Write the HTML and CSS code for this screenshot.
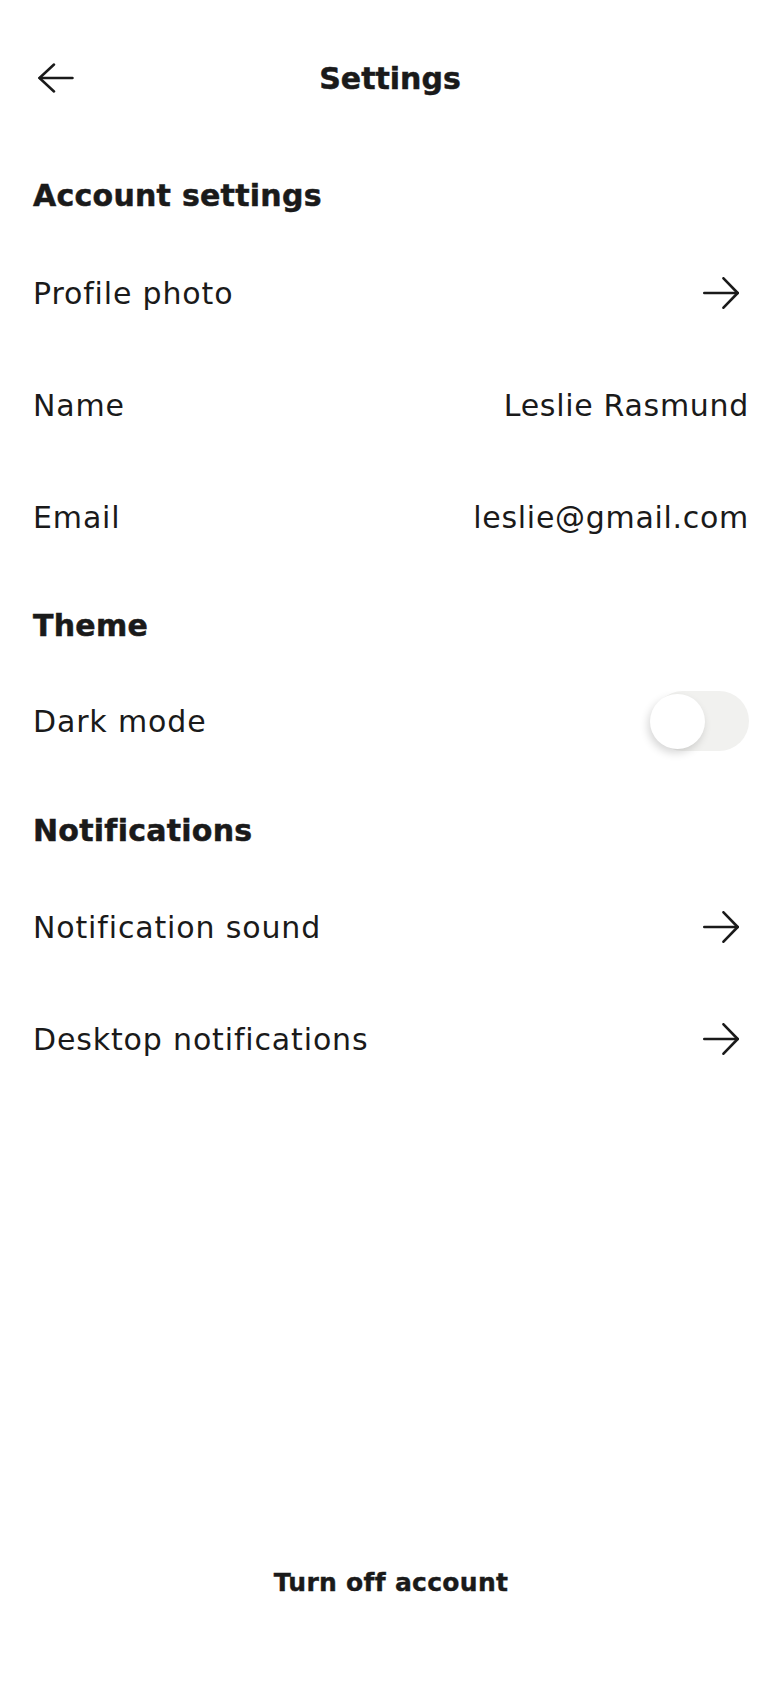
FILE: index.html
```html
<!DOCTYPE html>
<html lang="en">
<head>
<meta charset="utf-8">
<title>Settings</title>
<link rel="stylesheet" href="styles.css">
</head>
<body>
<div class="page">
  <header class="topbar">
    <button class="back" aria-label="Back">
      <svg width="36" height="30" viewBox="0 0 36 30" fill="none" stroke="currentColor" stroke-width="2.5" stroke-linecap="round" stroke-linejoin="round">
        <line x1="1.5" y1="15" x2="34.5" y2="15"/>
        <polyline points="16,1.5 1.5,15 16,28.5"/>
      </svg>
    </button>
    <h1 class="title">Settings</h1>
    <span class="spacer"></span>
  </header>

  <main class="content">
    <section class="section section-first">
      <h2 class="section-title">Account settings</h2>
      <div class="row">
        <span class="label">Profile photo</span>
        <svg class="chevron" width="36" height="32" viewBox="0 0 36 32" fill="none" stroke="currentColor" stroke-width="2.6" stroke-linecap="round" stroke-linejoin="round">
          <line x1="1.3" y1="16" x2="34.7" y2="16"/>
          <polyline points="20.5,1.3 34.7,16 20.5,30.7"/>
        </svg>
      </div>
      <div class="row">
        <span class="label">Name</span>
        <span class="value">Leslie Rasmund</span>
      </div>
      <div class="row">
        <span class="label">Email</span>
        <span class="value">leslie@gmail.com</span>
      </div>
    </section>

    <section class="section">
      <h2 class="section-title">Theme</h2>
      <div class="row">
        <span class="label">Dark mode</span>
        <span class="toggle" role="switch" aria-checked="false"><span class="knob"></span></span>
      </div>
    </section>

    <section class="section section-notify">
      <h2 class="section-title">Notifications</h2>
      <div class="row">
        <span class="label">Notification sound</span>
        <svg class="chevron" width="36" height="32" viewBox="0 0 36 32" fill="none" stroke="currentColor" stroke-width="2.6" stroke-linecap="round" stroke-linejoin="round">
          <line x1="1.3" y1="16" x2="34.7" y2="16"/>
          <polyline points="20.5,1.3 34.7,16 20.5,30.7"/>
        </svg>
      </div>
      <div class="row">
        <span class="label">Desktop notifications</span>
        <svg class="chevron" width="36" height="32" viewBox="0 0 36 32" fill="none" stroke="currentColor" stroke-width="2.6" stroke-linecap="round" stroke-linejoin="round">
          <line x1="1.3" y1="16" x2="34.7" y2="16"/>
          <polyline points="20.5,1.3 34.7,16 20.5,30.7"/>
        </svg>
      </div>
    </section>
  </main>

  <footer class="footer">
    <button class="danger">Turn off account</button>
  </footer>
</div>
</body>
</html>
```

FILE: styles.css
```css
* { box-sizing: border-box; }

html, body {
  margin: 0;
  padding: 0;
  background: #ffffff;
}

body {
  font-family: "DejaVu Sans", "Open Sans", sans-serif;
  color: #1a1a1a;
}

.page {
  min-height: 100vh;
  display: flex;
  flex-direction: column;
  padding: 0 31px 0 33px;
}

.topbar {
  margin-top: 46px;
  height: 64px;
  display: grid;
  grid-template-columns: 60px 1fr 60px;
  align-items: center;
}

.back {
  border: 0;
  background: none;
  padding: 0;
  margin-left: 5px;
  color: #1a1a1a;
  display: flex;
  align-items: center;
  width: 36px;
}

.title {
  margin: 0;
  text-align: center;
  font-size: 30px;
  font-weight: 700;
  line-height: 35px;
  letter-spacing: 0;
  -webkit-text-stroke: 0.5px #1a1a1a;
  transform: translateX(-1px);
}

.content {
  margin-top: 68px;
  display: flex;
  flex-direction: column;
}

.section + .section {
  margin-top: 35px;
}

.section-notify {
  padding-top: 1px;
}

.section-title {
  margin: 0 0 22px;
  font-size: 30px;
  font-weight: 700;
  line-height: 35px;
  letter-spacing: 0.25px;
  -webkit-text-stroke: 0.5px #1a1a1a;
}

.section-first .section-title {
  margin-bottom: 24px;
}

.section-notify .section-title {
  margin-bottom: 23px;
}

.row {
  height: 112px;
  display: flex;
  align-items: center;
  justify-content: space-between;
}

.label,
.value {
  font-size: 30px;
  line-height: 35px;
  letter-spacing: 0.85px;
}

.value {
  letter-spacing: 0.7px;
}

.chevron {
  color: #1a1a1a;
  margin-right: 10px;
}

.toggle {
  position: relative;
  width: 96px;
  height: 60px;
  border-radius: 30px;
  background: #f1f1ef;
}

.knob {
  position: absolute;
  left: -3px;
  top: 3px;
  width: 55px;
  height: 55px;
  border-radius: 50%;
  background: #ffffff;
  box-shadow: -2px 4px 9px rgba(0, 0, 0, 0.16);
}

.footer {
  margin-top: auto;
  padding-bottom: 91px;
  display: flex;
  justify-content: center;
}

.danger {
  border: 0;
  background: none;
  padding: 0;
  font-family: "DejaVu Sans", "Open Sans", sans-serif;
  font-size: 25px;
  font-weight: 700;
  line-height: 29px;
  color: #1a1a1a;
  letter-spacing: 0.3px;
  -webkit-text-stroke: 0.4px #1a1a1a;
}
```
